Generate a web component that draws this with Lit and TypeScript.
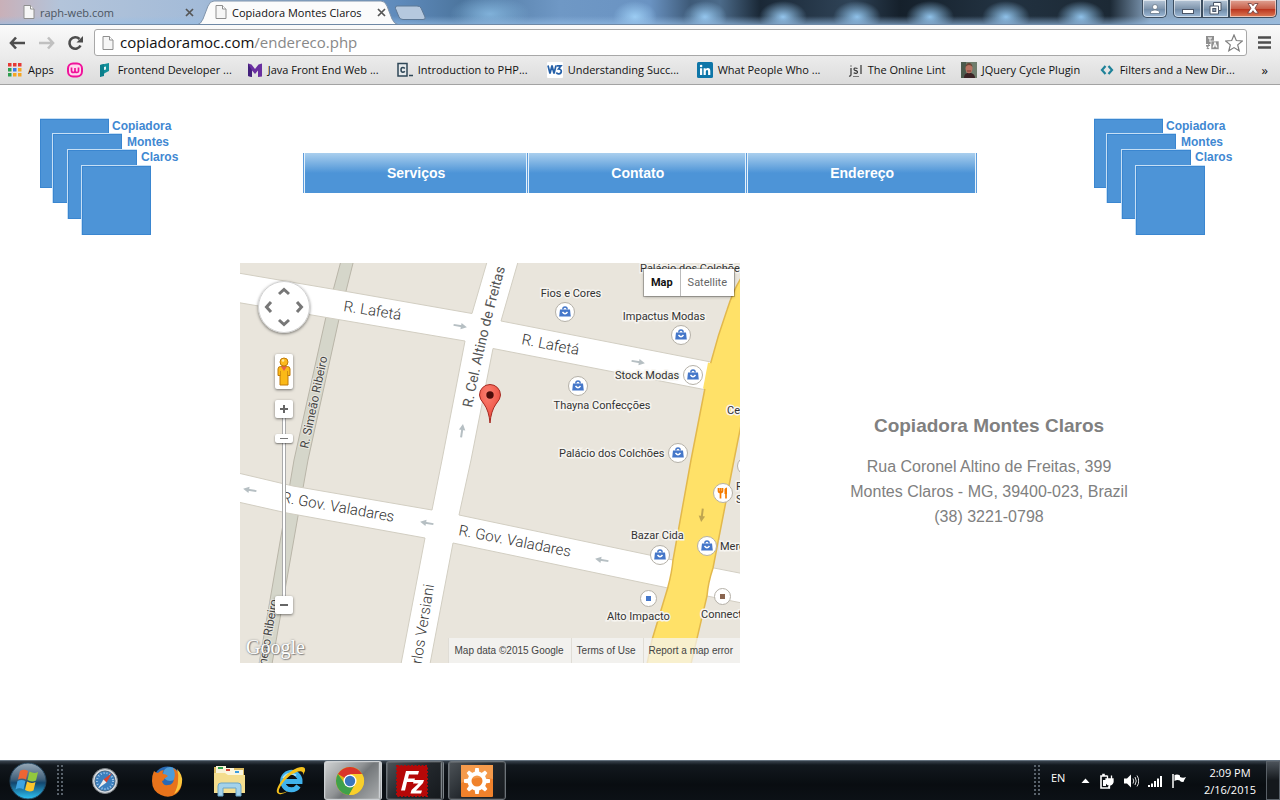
import { LitElement, html, svg, css } from "lit";
import { customElement } from "lit/decorators.js";

const pageIcon = html`<svg width="12" height="14" viewBox="0 0 12 14" aria-hidden="true">
  <path d="M1 .5h6.5L11 4v9.5H1z" fill="#f6f6f6" stroke="#8f8f8f" />
  <path d="M7.5.5V4H11" fill="#fff" stroke="#8f8f8f" />
</svg>`;

const reset = css`
  * { box-sizing: border-box; }
  button { font: inherit; color: inherit; background: none; border: 0; padding: 0; margin: 0; }
  a { color: inherit; text-decoration: none; }
  svg { display: block; flex: none; }
`;

interface Bookmark { label: string; size: string; icon: unknown; }

const bookmarks: Bookmark[] = [
  {
    label: "Frontend Developer ...", size: "long",
    icon: svg`<path d="M3 3l9-2v8l-4 2-5 4z" fill="#12909a"/><path d="M3 3l4-1v12l-4 1z" fill="#0c7f8c"/><path d="M7 5l2-.5v3L7 8z" fill="#e4f4f5"/>`,
  },
  {
    label: "Java Front End Web ...", size: "long",
    icon: svg`<path d="M1 1.500l3.500 1L8 7l3.500-4.500 3.500-1v13l-4 .5V8.500L8 12 5 8.500V15l-4-1z" fill="#6a2fa0"/><path d="M1 1.500L5 8.500V15l-4-1z" fill="#43207c"/>`,
  },
  {
    label: "Introduction to PHP...", size: "long",
    icon: svg`<rect x="1" y="1.500" width="9" height="12.500" fill="#e6eaec" stroke="#2f4757" stroke-width="1.500"/><path d="M7.800 6.500Q7 5.500 5.800 5.500 4 5.500 4 7.800 4 10.200 5.800 10.200 7 10.200 7.800 9.200" fill="none" stroke="#2f4757" stroke-width="1.500"/><path d="M12 13.500h4" stroke="#2f4757" stroke-width="1.500"/>`,
  },
  {
    label: "Understanding Succ...", size: "long",
    icon: svg`<rect width="16" height="16" rx="1" fill="#fff"/><path d="M1 3.500l2 8 2-8 2 8 2-8" fill="none" stroke="#2560a8" stroke-width="1.700"/><path d="M9.500 3.800h4.500L11.500 7q3 .2 2.800 2.600Q14 12 11.500 11.800q-1.500 0-2.200-1.300" fill="none" stroke="#2560a8" stroke-width="1.700"/>`,
  },
  {
    label: "What People Who ...", size: "long",
    icon: svg`<rect width="16" height="16" rx="1.500" fill="#0e76a8"/><path d="M3 6.300h2.200V13H3zM6.600 6.300h2.100v.9q.8-1.100 2.200-1.100 2.400 0 2.400 2.900v4h-2.200V9.400q0-1.400-1.100-1.400-1.200 0-1.200 1.500V13H6.600z" fill="#fff"/><circle cx="4.100" cy="4" r="1.300" fill="#fff"/>`,
  },
  {
    label: "The Online Lint", size: "short",
    icon: svg`<path d="M4 6v6.500q0 2-2 1.500M4 3.500v1M10.500 6.500Q7 5.200 7 7.200q0 1 1.800 1.400 2 .5 1.600 1.800-.8 1.600-3.700.5M14 3v9" fill="none" stroke="#333" stroke-width="1.200"/><path d="M6 14.500h6" stroke="#777"/>`,
  },
  {
    label: "JQuery Cycle Plugin", size: "medium",
    icon: svg`<rect width="16" height="16" fill="#6f7d6d"/><rect width="5" height="16" fill="#4c5b4d"/><path d="M3 16q0-4 3-5h4q4 1 4 5z" fill="#3a2325"/><ellipse cx="8" cy="6.500" rx="3.500" ry="4.800" fill="#b87362"/><path d="M4.500 5Q5 1 8 1t3.500 4Q10 3 8 3T4.500 5z" fill="#6b4636"/><path d="M6 9h4" stroke="#7e3d36"/>`,
  },
  {
    label: "Filters and a New Dir...", size: "long",
    icon: svg`<path d="M6.500 4L3 8l3.500 4M9.500 4L13 8l-3.500 4" fill="none" stroke="#1f8299" stroke-width="2.200"/>`,
  },
];

@customElement("browser-chrome")
class BrowserChrome extends LitElement {
  static styles = [reset, css`
    :host { display: block; font-family: "Open Sans", "Noto Sans", sans-serif; font-size: 11px; color: #111; }
    .titlebar {
      display: flex; height: 25px; padding-left: 5px; overflow: hidden;
      background:
        linear-gradient(to bottom, transparent 16px, rgba(150, 190, 230, .6) 24px),
        radial-gradient(ellipse 22px 16px at 635px 17px, #9ccdf4, transparent),
        radial-gradient(ellipse 22px 16px at 705px 17px, #94c6ee, transparent),
        radial-gradient(ellipse 24px 16px at 783px 17px, #94c6ee, transparent),
        radial-gradient(ellipse 24px 16px at 857px 17px, #8fc2ea, transparent),
        radial-gradient(ellipse 24px 16px at 930px 17px, #8fc2ea, transparent),
        radial-gradient(ellipse 24px 16px at 1006px 17px, #8fc2ea, transparent),
        radial-gradient(ellipse 24px 16px at 1081px 17px, #8fc2ea, transparent),
        radial-gradient(ellipse 40px 18px at 490px 14px, #80b1d9, transparent),
        linear-gradient(to right, #c9b0b8 0, #b3c4da 60px, #a3bbd8 200px, #5e8abb 400px, #4d769f 460px, #6f98c5 560px, #6a93c2 650px, #3e5a78 690px, #4c6b8a 720px, #1a2836 760px, #2f4357 850px, #15202b 900px, #223241 1000px, #1c2935 1110px, #87a3bf 1150px, #9db7d2 100%);
      border-bottom: 1px solid #6e88a5;
    }
    .tab { position: relative; display: flex; align-items: center; width: 203px; height: 25px; margin-right: -11px; padding: 0 14px 1px 18px; gap: 6px; color: #4b5561; }
    .tab.active { z-index: 1; color: #111; }
    .shape { position: absolute; inset: 0; z-index: -1; }
    .tab-name { flex: 1; display: flex; align-items: center; gap: 5px; text-align: left; white-space: nowrap; }
    .newtab { margin-top: 5px; margin-left: 5px; height: 16px; }
    .window { display: flex; margin-left: auto; align-items: flex-start; padding-right: 3px; }
    .winbtn { display: grid; place-items: center; height: 18px; width: 27px; border: 1px solid #3d4e60; border-top: 0; box-shadow: inset 0 0 0 1px rgba(255, 255, 255, .55); background: linear-gradient(#b6c6d7, #8096ae 50%, #6f89a5 51%, #9db9d6); }
    .user { width: 25px; margin-right: 6px; border-radius: 0 0 5px 5px; }
    .min { border-radius: 0 0 0 5px; width: 29px; }
    .close { width: 48px; border-radius: 0 0 5px 0; background: linear-gradient(#e0a394, #c8604a 50%, #b8301a 51%, #dd7a55); }
    .toolbar { display: flex; align-items: center; padding: 3px 9px 0; height: 32px; background: linear-gradient(#fafafa, #ebebeb); }
    .toolbar button { width: 17px; margin-right: 12px; }
    .toolbar .more { width: 13px; margin: 0 0 0 11px; }
    .omnibox { flex: 1; display: flex; align-items: center; height: 27px; padding: 0 3px 0 7px; gap: 6px; background: #fff; border: 1px solid #a8a8a8; border-radius: 3px; margin-left: -2px; }
    .address { position: relative; flex: 1; height: 25px; display: flex; }
    .url { flex: 1; border: 0; outline: 0; padding: 0; background: none; font: 15px/25px "Open Sans", "Noto Sans", sans-serif; color: transparent; min-width: 0; }
    .shown { position: absolute; inset: 0; font-size: 15px; line-height: 25px; color: #111; pointer-events: none; }
    .shown .path { color: #888; }
    .bookmarks { display: flex; align-items: center; height: 28px; padding: 0 12px 2px 8px; background: linear-gradient(#ebebeb, #dcdcdc); border-bottom: 1px solid #a3a3a3; white-space: nowrap; }
    .mark { display: flex; align-items: center; gap: 5px; margin-right: 14px; }
    .long { min-width: 136px; }
    .medium { min-width: 124px; }
    .short { min-width: 100px; }
    .apps { gap: 6px; margin-right: 13px; }
    .overflow { margin-left: auto; font-size: 13px; }
  `];

  tab(name: string, active: boolean) {
    return html`<div class="tab ${active ? "active" : ""}">
      <svg class="shape" width="203" height="25" viewBox="0 0 203 25" aria-hidden="true">
        <path d="M0 25Q4 24 6 19L11 6Q13 1 17 1H184Q188 1 190 6L195 19Q197 24 202 25Z" fill="${active ? "#fbfbfb" : "#c5d3e4"}" stroke="${active ? "#8094ab" : "#6d839d"}" />
      </svg>
      <button class="tab-name">${pageIcon}<span>${name}</span></button>
      <button aria-label="Close tab"><svg width="9" height="9" viewBox="0 0 9 9"><path d="M1 1l7 7M8 1L1 8" stroke="#555" stroke-width="1.700" /></svg></button>
    </div>`;
  }

  render() {
    return html`
      <div class="titlebar">
        ${this.tab("raph-web.com", false)}${this.tab("Copiadora Montes Claros", true)}
        <button class="newtab" aria-label="New tab">
          <svg width="33" height="16" viewBox="0 0 33 16"><path d="M3 1H23Q26 1 27 3L31 12Q32 14.500 29 14.500H9Q6 14.500 5 12L1.500 3.500Q1 1 3 1Z" fill="#b5c8de" stroke="#5d7896" /></svg>
        </button>
        <div class="window">
          <button class="winbtn user" aria-label="User"><svg width="10" height="10" viewBox="0 0 10 10"><circle cx="5" cy="3" r="2.500" fill="#fff" stroke="#4a5a6b" stroke-width=".6" /><path d="M.5 9.500V8Q1 6 5 6t4.500 2v1.500z" fill="#fff" stroke="#4a5a6b" stroke-width=".6" /></svg></button>
          <button class="winbtn min" aria-label="Minimize"><svg width="12" height="12" viewBox="0 0 12 12"><rect x=".5" y="6.500" width="11" height="4" fill="#fff" stroke="#4a5567" /></svg></button>
          <button class="winbtn" aria-label="Restore"><svg width="13" height="13" viewBox="0 0 13 13"><path d="M4.500.5h7.500v8H9.500v3.500H1V4h3.500z" fill="#fff" stroke="#4a5567" /><path d="M4.500 4h5v4.500" fill="none" stroke="#4a5567" /><rect x="3.800" y="6.500" width="3" height="3" fill="#8a9bb0" stroke="#4a5567" /></svg></button>
          <button class="winbtn close" aria-label="Close"><svg width="12" height="11" viewBox="0 0 12 11"><path d="M1 .5h3.300L6 2.800 7.700.5H11L8 5.200l3.300 5H7.800L6 7.700l-1.800 2.500H.7L4 5.200z" fill="#fff" stroke="#6b3a3a" stroke-width=".8" /></svg></button>
        </div>
      </div>
      <div class="toolbar">
        <button aria-label="Back"><svg width="17" height="14" viewBox="0 0 17 14"><path d="M7 1.500L2 7l5 5.500M2 7h14" fill="none" stroke="#4d4d4d" stroke-width="2.600" /></svg></button>
        <button aria-label="Forward"><svg width="17" height="14" viewBox="0 0 17 14"><path d="M10 1.500L15 7l-5 5.500M15 7H1" fill="none" stroke="#c0c0c0" stroke-width="2.600" /></svg></button>
        <button aria-label="Reload"><svg width="17" height="16" viewBox="0 0 17 16"><path d="M13.500 10.500A5.800 5.800 0 1 1 12.500 4" fill="none" stroke="#4d4d4d" stroke-width="2.600" /><path d="M16 1v6.500H9.500z" fill="#4d4d4d" /></svg></button>
        <div class="omnibox">
          ${pageIcon}
          <div class="address">
            <input class="url" aria-label="Address" value="copiadoramoc.com/endereco.php" />
            <div class="shown" aria-hidden="true">copiadoramoc.com<span class="path">/endereco.php</span></div>
          </div>
          <svg width="14" height="14" viewBox="0 0 14 14" aria-hidden="true"><rect x="1" width="8" height="8" fill="#8f8f8f" /><path d="M3 2h4M5 2v4" stroke="#fff" /><rect x="6" y="5" width="8" height="8.500" fill="#8f8f8f" stroke="#fff" stroke-width=".6" /><path d="M8 11.500l2-5 2 5M8.700 10h2.600" fill="none" stroke="#fff" stroke-width="1.100" /><path d="M1 9.500h4M2 13l2-5M4 13L1.500 10" stroke="#8f8f8f" stroke-width="1.100" /></svg>
          <svg width="18" height="18" viewBox="0 0 18 18" aria-hidden="true"><path d="M9 1l2.300 5.500 6 .5-4.600 3.900 1.500 5.900L9 13.600l-5.200 3.200 1.500-5.900L.7 7l6-.5z" fill="#fff" stroke="#7d7d7d" stroke-width="1.200" /></svg>
        </div>
        <button class="more" aria-label="Menu"><svg width="13" height="13" viewBox="0 0 13 13"><path d="M0 1.500h13M0 6.500h13M0 11.500h13" stroke="#4d4d4d" stroke-width="2.600" /></svg></button>
      </div>
      <div class="bookmarks">
        <a class="mark apps" href="#"><svg width="14" height="14" viewBox="0 0 14 14">${["#e53935", "#e53935", "#e53935", "#2e9e4f", "#3b78e7", "#f5a623", "#2e9e4f", "#f5a623", "#f5a623"].map((c, i) => svg`<rect x="${(i % 3) * 5}" y="${Math.floor(i / 3) * 5}" width="3.500" height="3.500" fill="${c}" />`)}</svg>Apps</a>
        <a class="mark" href="#" aria-label="Wamp"><svg width="16" height="16" viewBox="0 0 16 16"><rect x="1" y="1.500" width="14" height="13" rx="5" fill="#ffd9ee" stroke="#f0139b" stroke-width="2" /><path d="M4.500 5.500v3Q4.500 10.500 6.300 10.500 8 10.500 8 8.500V6 8.500Q8 10.500 9.800 10.500t1.700-2v-3" fill="none" stroke="#f0139b" stroke-width="1.700" /></svg></a>
        ${bookmarks.map((b) => html`<a class="mark ${b.size}" href="#"><svg width="16" height="16" viewBox="0 0 16 16">${b.icon}</svg>${b.label}</a>`)}
        <button class="overflow" aria-label="More bookmarks">»</button>
      </div>
    `;
  }
}

const poi = (x: number, y: number) => svg`<g transform="translate(${x} ${y})">
  <circle r="9.500" fill="#fff" stroke="#b5b1a8" />
  <path d="M-5-2.500h10L5.800 4.500H-5.800Z" fill="#4577c9" /><path d="M-2.200-2.500q0-2.500 2.200-2.500t2.200 2.500" fill="none" stroke="#4577c9" stroke-width="1.400" />
  <path d="M-2.500 0q2.500 3.500 5 0" fill="none" stroke="#fff" stroke-width="1.300" />
</g>`;
const arrow = (x: number, y: number, turn: number, tone = "#b6bfc3") => svg`<g transform="translate(${x} ${y}) rotate(${turn})">
  <path d="M-6.500 0H2" stroke="${tone}" stroke-width="2" /><path d="M1-3.200L7 0 1 3.200z" fill="${tone}" />
</g>`;

@customElement("street-map")
class StreetMap extends LitElement {
  static styles = [reset, css`
    :host { display: block; position: relative; width: 500px; height: 400px; overflow: hidden; background: #e9e5dc; font-family: Roboto, sans-serif; color: #444; }
    .road { fill: #fff; stroke: #d2cec2; }
    .street { font-size: 15px; font-weight: 300; fill: #333; }
    .avenue { font-size: 14px; font-weight: 400; fill: #555; }
    .minor { font-size: 12px; fill: #444; stroke: #e9e7e0; stroke-width: 2px; paint-order: stroke; }
    .place { font-size: 11px; fill: #333; stroke: #f6f4ef; stroke-width: 3px; paint-order: stroke; }
    .mid { text-anchor: middle; }
    .end { text-anchor: end; }
    .controls { position: absolute; left: 18px; top: 18px; display: flex; flex-direction: column; align-items: center; }
    .box { display: grid; place-items: center; width: 18px; height: 18px; background: #fff; border-radius: 2px; box-shadow: 0 1px 3px rgba(0, 0, 0, .5); z-index: 1; }
    .pan { border-radius: 50%; box-shadow: 0 1px 3px rgba(0, 0, 0, .5); margin-bottom: 21px; }
    .pegman { height: 35px; margin-bottom: 11px; }
    .zoom { appearance: none; writing-mode: vertical-lr; direction: rtl; width: 18px; height: 178px; margin: 0; background: linear-gradient(to right, transparent 7px, #aaa 7px, #aaa 8px, #fff 8px, #fff 10px, #aaa 10px, #aaa 11px, transparent 11px); }
    .zoom::-webkit-slider-thumb { appearance: none; width: 18px; height: 9px; border: 0; border-radius: 2px; background: linear-gradient(#777, #777) center / 8px 1px no-repeat, #fff; box-shadow: 0 1px 2px rgba(0, 0, 0, .5); }
    .types { position: absolute; right: 6px; top: 6px; display: flex; height: 27px; background: #fff; box-shadow: 0 0 0 1px rgba(0, 0, 0, .22), 0 1px 3px rgba(0, 0, 0, .3); font-size: 11px; }
    .types button { padding: 0 7px; color: #666; }
    .types .on { color: #111; font-weight: 700; border-right: 1px solid #bbb; }
    .legal { position: absolute; right: 0; bottom: 0; display: flex; height: 25px; align-items: center; font: 10px "Liberation Sans", Arial, sans-serif; }
    .legal > * { padding: 0 7px 0 5px; line-height: 25px; background: rgba(245, 245, 245, .72); border-left: 1px solid #e0ddd6; }
    .logo { position: absolute; left: 6px; bottom: 2px; font: 20px/27px "Liberation Serif", serif; color: #fff; text-shadow: 0 0 2px #777, 1px 1px 1px #888; }
  `];

  render() {
    return html`
      <svg width="500" height="400" viewBox="0 0 500 400" role="img" aria-label="Map of Rua Coronel Altino de Freitas">
        <defs>
          <path id="altino" d="M232 145Q247 67 269-8" />
          <radialGradient id="pin" cx=".4" cy=".25" r=".8"><stop offset="0" stop-color="#fb8071" /><stop offset="1" stop-color="#ea4335" /></radialGradient>
        </defs>
        <path d="M100.700-1L85.700 55 54 197 45 250 19 401H32L58 253 68 197 99 56 113.300-1Z" fill="#d5d6ca" stroke="#b9b5a8" />
        <path class="road" d="M-2 10L98 27 232 50.500 247-1H278L261 58 471 99 490 140 464 126.500 253 85.500 231 197 219 252 433 297 502 310.500V340L467 333 428 325 213 280 190 401H161L185 275 47 250-2 239V210L53 223 192 247 202 197 225 78-2 39.500Z" />
        <path d="M501 15Q493 28 487 47 478 72 471 99 468 108 466 120L451 197 433 297Q432 309 427.700 325L412 377 407 401H451L467 333Q468 320 473 305L494 197 501 162Z" fill="#ffe168" stroke="#e2b84c" stroke-width="1.500" />
        <path d="M470 100L465 126" stroke="#ffe168" stroke-width="4" />
        ${arrow(220, 63, 10)}${arrow(398, 99, 10)}${arrow(222, 168, -82)}${arrow(10, 227, 190)}${arrow(187, 260, 190)}${arrow(362, 297, 190)}${arrow(462, 252, 97, "#bfa550")}
        <text class="street" transform="translate(103 48) rotate(9)">R. Lafetá</text>
        <text class="street" transform="translate(281 81) rotate(11)">R. Lafetá</text>
        <text class="street avenue"><textPath href="#altino">R. Cel. Altino de Freitas</textPath></text>
        <text class="street" transform="translate(41 239) rotate(10)">R. Gov. Valadares</text>
        <text class="street" transform="translate(218 272) rotate(11)">R. Gov. Valadares</text>
        <text class="street end" transform="translate(194 322) rotate(-81)">R. Carlos Versiani</text>
        <text class="minor" transform="translate(68 186) rotate(-78)">R. Simeão Ribeiro</text>
        <text class="minor end" transform="translate(38 337) rotate(-80)">R. Simeão Ribeiro</text>
        <text class="place" x="400" y="9">Palácio dos Colchões</text>
        <text class="place mid" x="331" y="34">Fios e Cores</text>
        <text class="place mid" x="424" y="57">Impactus Modas</text>
        <text class="place" x="375" y="116">Stock Modas</text>
        <text class="place mid" x="362" y="146">Thayna Confecções</text>
        <text class="place" x="319" y="194">Palácio dos Colchões</text>
        <text class="place" x="391" y="276">Bazar Cida</text>
        <text class="place" x="367" y="357">Alto Impacto</text>
        <text class="place" x="461" y="355">Connect</text>
        <text class="place" x="480" y="287">Merc</text>
        <text class="place" x="487" y="151">Ce</text>
        <text class="place" x="496" y="227">R</text>
        <text class="place" x="496" y="240">S</text>
        ${poi(325, 49)}${poi(441, 72)}${poi(453, 112)}${poi(338, 123)}${poi(438, 190)}${poi(420, 292)}${poi(467, 283)}
        <circle cx="506" cy="203" r="8.500" fill="#fff" stroke="#b5b1a8" />
        <circle cx="483" cy="230" r="9.500" fill="#fff" stroke="#b5b1a8" />
        <path d="M478.500 225v3q0 1.500 2 1.500t2-1.500v-3M480.500 225v10.500M486 235.500V230" fill="none" stroke="#f57c00" stroke-width="1.700" /><path d="M484.500 231v-5q1-1.500 2.500-1.500v6.500z" fill="#f57c00" />
        <circle cx="408.500" cy="335.500" r="8" fill="#fff" stroke="#b5b1a8" /><rect x="406" y="333" width="5" height="5" fill="#4577c9" />
        <circle cx="482.500" cy="333.500" r="8" fill="#fff" stroke="#b5b1a8" /><rect x="480" y="331" width="5" height="5" fill="#8a6550" />
        <path d="M250 160Q249 148 244 141 239.500 136 239.500 132A10.500 10.500 0 0 1 260.500 132Q260.500 136 256 141 251 148 250 160Z" fill="url(#pin)" stroke="#a52a22" />
        <circle cx="250" cy="132" r="3.700" fill="#4c0d0a" />
      </svg>
      <div class="controls">
        <button class="pan" aria-label="Pan"><svg width="52" height="52" viewBox="0 0 52 52"><circle cx="26" cy="26" r="25.500" fill="#fff" stroke="#d0d0d0" /><path d="M21 13l5-4.500 5 4.500M21 39l5 4.500 5-4.500M13 21l-4.500 5 4.500 5M39 21l4.500 5-4.500 5" fill="none" stroke="#777" stroke-width="3" /></svg></button>
        <button class="box pegman" aria-label="Street View"><svg width="14" height="29" viewBox="0 0 14 29"><path d="M3.500 9.500h7q2.500 0 2.500 2.500v6.500h-2V28H3V18.500H1V12q0-2.500 2.500-2.500z" fill="#fbb917" stroke="#c07b0b" /><path d="M4 9.500h6L7 14z" fill="#e8604c" /><path d="M3.500 14v5M10.500 14v5" stroke="#c98410" stroke-width=".8" /><circle cx="7" cy="5" r="4" fill="#fcb91e" stroke="#c07b0b" /><circle cx="6" cy="3.500" r="1.300" fill="#ffe79a" /></svg></button>
        <button class="box" aria-label="Zoom in"><svg width="8" height="8" viewBox="0 0 8 8"><path d="M0 4h8M4 0v8" stroke="#666" stroke-width="2" /></svg></button>
        <input class="zoom" type="range" min="0" max="21" value="19" aria-label="Zoom level" />
        <button class="box" aria-label="Zoom out"><svg width="8" height="8" viewBox="0 0 8 8"><path d="M0 4h8" stroke="#666" stroke-width="2" /></svg></button>
      </div>
      <div class="types"><button class="on">Map</button><button>Satellite</button></div>
      <div class="logo">Google</div>
      <div class="legal"><span>Map data ©2015 Google</span><a href="#">Terms of Use</a><a href="#">Report a map error</a></div>
    `;
  }
}

@customElement("site-page")
class SitePage extends LitElement {
  static styles = [reset, css`
    :host { display: block; background: #fff; font-family: "Liberation Sans", Arial, sans-serif; overflow: hidden; }
    .header { display: grid; grid-template-columns: 1fr auto 1fr; align-items: start; padding: 33px 40px 0; }
    .header > :last-child { justify-self: end; }
    .brand { font-size: 12px; font-weight: 700; fill: #3f88d2; }
    .nav { display: flex; margin-top: 35px; border-left: 1px solid #5d9cdc; }
    .nav a { padding: 0 82px; font-size: 14px; font-weight: 700; line-height: 40px; color: #fff; background: linear-gradient(#aacfee, #4d94d7 50%); border-left: 1px solid #e4f1fb; border-right: 1px solid #5d9cdc; box-shadow: inset -1px 0 #e4f1fb; }
    .content { display: grid; grid-template-columns: auto 1fr; margin: 27px 42px 0 240px; }
    .contact { padding-top: 150px; text-align: center; color: #808080; }
    h1 { margin: 0 0 16px; font-size: 19px; line-height: 25px; }
    p { margin: 0; font-size: 16px; line-height: 25px; }
  `];

  logo() {
    return html`<svg width="146" height="118" viewBox="0 0 146 118" role="img" aria-label="Copiadora Montes Claros">
      ${[[0, 1], [13, 16], [28, 32], [42, 48]].map(([x, y]) => svg`<rect x="${x - 1}" y="${y - 1}" width="70" height="70" fill="#c6dff5" /><rect x="${x + 0.5}" y="${y + 0.5}" width="68" height="68" fill="#4d94d7" stroke="#3a86d0" />`)}
      <text class="brand" x="72" y="12">Copiadora</text><text class="brand" x="87" y="28">Montes</text><text class="brand" x="101" y="43">Claros</text>
    </svg>`;
  }

  render() {
    return html`
      <div class="header">
        <a href="#">${this.logo()}</a>
        <nav class="nav"><a href="#">Serviços</a><a href="#">Contato</a><a href="#">Endereço</a></nav>
        <a href="#">${this.logo()}</a>
      </div>
      <div class="content">
        <street-map></street-map>
        <div class="contact">
          <h1>Copiadora Montes Claros</h1>
          <p>Rua Coronel Altino de Freitas, 399</p>
          <p>Montes Claros - MG, 39400-023, Brazil</p>
          <p>(38) 3221-0798</p>
        </div>
      </div>
    `;
  }
}

const launchers = [
  {
    name: "Safari",
    art: svg`<circle cx="16" cy="16" r="12.500" fill="#d6dade" stroke="#7b8186" /><circle cx="16" cy="16" r="10" fill="#3b7fbf" stroke="#486b8a" /><circle cx="16" cy="16" r="8" fill="none" stroke="#a9cdee" stroke-dasharray="1 2" stroke-width="2" /><path d="M23 8l-5.500 9.500-3-3z" fill="#e0442d" /><path d="M9 23.500l5.500-9 3 3z" fill="#eee" />`,
  },
  {
    name: "Firefox",
    art: svg`<circle cx="16.500" cy="15.500" r="14" fill="#2a69b4" /><circle cx="19" cy="9" r="7" fill="#4d9cd8" /><path d="M3 6q2 2 4 2 3-3 6-3-2 2-1 4 3 0 5 2l-4 3q0 2-2 2 1 5 6 4 5 0 6-6 2-5-1-11 7 4 8.500 11Q32 24 25 29t-15 1Q1 26 1 16 1 10 3 6z" fill="#e8731b" /><path d="M26 4q6 6 5 13-1 8-8 12 4-7 4-13 1-6-1-12z" fill="#fbc63c" />`,
  },
  {
    name: "Windows Explorer",
    art: svg`<path d="M1 2h11l1 3h7v-2h11v24H1z" fill="#d9b961" /><rect x="3" y="1" width="10" height="7" fill="#f9f3d8" /><rect x="5" y="2" width="5" height="2" fill="#31a24c" /><rect x="12" y="3" width="9" height="7" fill="#fbf6de" /><rect x="13" y="4" width="4" height="2" fill="#d94a38" /><rect x="20" y="5" width="10" height="6" fill="#fbf6de" /><rect x="22" y="6" width="4" height="2" fill="#3e9ddd" /><path d="M1 8h11l3 2h17v18H1z" fill="#f4dd8e" /><path d="M5 31V21q0-3 3-3h17q3 0 3 3v10h-5v-8H10v8z" fill="#a4d2ea" stroke="#6aa5c8" />`,
  },
  {
    name: "Internet Explorer",
    art: svg`<path d="M23.500 21A8.700 8.700 0 1 1 25 16.500H9" fill="none" stroke="#3fb2ec" stroke-width="5" /><path d="M21 10.500A8.700 8.700 0 0 0 8 13" fill="none" stroke="#a5e1fb" stroke-width="1.700" /><path d="M4 29Q-1 28 5 18 12 7 22 3q9-3 8 3-1 2-2 4 1-5-5-3.500Q13 10 7 19 1 28 6 28q3 0 7-2-5 4-9 3z" fill="#f4c11c" />`,
  },
];
const running = [
  {
    name: "Google Chrome", state: "active stacked",
    art: svg`<circle cx="16" cy="16" r="14" fill="#dfb914" /><path d="M16 16L3.900 9A14 14 0 0 1 28.100 9z" fill="#d9352a" /><path d="M3.900 9A14 14 0 0 0 15 30l6-11H11z" fill="#3fa04a" /><path d="M28.100 9H16l5.500 10L15 30A14 14 0 0 0 28.100 9z" fill="#f8cf2c" /><circle cx="16" cy="16" r="6.500" fill="#fff" /><circle cx="16" cy="16" r="5.200" fill="#3a76bd" />`,
  },
  {
    name: "FileZilla", state: "stacked",
    art: svg`<rect x="1" y="1" width="30" height="30" fill="#b50808" stroke="#b50808" stroke-width="2" stroke-dasharray="2 1.500" /><path d="M10 6h13l-1 3.500H13l-1 4h7l-1 3.500h-7L9 25.500H5zM18 15h10l-1 3-7 7.500h6l-1 3H14.500l1-3.500 7-6.500h-5.500z" fill="#fff" />`,
  },
  {
    name: "Aptana Studio", state: "",
    art: svg`<rect width="32" height="32" rx="1" fill="#f0822c" /><path d="M0 0h32v14Q16 10 0 18z" fill="#f59a4b" />${[0, 45, 90, 135, 180, 225, 270, 315].map((a) => svg`<path d="M13.500 8l.8-5h3.400l.8 5z" fill="#fff" transform="rotate(${a} 16 16)" />`)}<circle cx="16" cy="16" r="7.500" fill="none" stroke="#fff" stroke-width="4" />`,
  },
];

@customElement("task-bar")
class TaskBar extends LitElement {
  static styles = [reset, css`
    :host { box-sizing: border-box; display: flex; align-items: stretch; height: 40px; border-top: 1px solid #63707d; background: linear-gradient(#39434d, #12181e 4px, #090d11 60%, #0c1116); color: #fff; font: 11px/17px "Open Sans", "Noto Sans", sans-serif; }
    button { display: grid; place-items: center; }
    .start { width: 55px; }
    .grip { width: 8px; margin: 4px 9px 3px 2px; background: radial-gradient(circle at 1px 1px, #59626b 1px, transparent 1px) 0 0 / 4px 4px; }
    .launch { width: 62px; }
    .app { width: 58px; margin-left: 2px; margin-right: 2px; border: 1px solid #6c7379; border-radius: 3px; background: linear-gradient(135deg, #4d5358, #23282d 50%, #15191d); box-shadow: inset 0 0 0 1px rgba(255, 255, 255, .12); }
    .stacked { padding-right: 4px; border-right: 3px double #7c8388; }
    .active { background: linear-gradient(135deg, #cfd1d2, #8f9294 45%, #73777a 55%, #a9acad); border-color: #cdd1d4; }
    .tray { display: flex; align-items: center; margin-left: auto; }
    .tray .grip { align-self: stretch; }
    .lang { width: 17px; margin: 0 13px 6px 0; }
    .icons { display: flex; align-items: center; gap: 9px; }
    .clock { width: 72px; margin-left: 7px; text-align: center; line-height: 17px; }
    .desktop { align-self: stretch; width: 14px; border: 1px solid #596067; background: linear-gradient(#4b5259, #14181c 50%); }
  `];

  render() {
    return html`
      <button class="start" aria-label="Start"><svg width="38" height="38" viewBox="0 0 38 38">
        <defs><linearGradient id="orb" x2="0" y2="1"><stop offset="0" stop-color="#97a9b8" /><stop offset=".45" stop-color="#42617b" /><stop offset=".55" stop-color="#12466e" /><stop offset="1" stop-color="#2ec4f5" /></linearGradient></defs>
        <circle cx="19" cy="19" r="18" fill="url(#orb)" stroke="#24465f" />
        <path d="M11 9q4-2.500 8 0l-2 8.500q-4-2.200-8 0z" fill="#ee6534" /><path d="M20.500 9.500q4.500 2.500 8.500.5l-2 8.500q-4.500 2-8.500-.5z" fill="#93c83e" /><path d="M8.500 19q4-2.200 8 0l-2 8.500q-4-2.500-8 0z" fill="#3ea4e2" /><path d="M18 19.500q4.500 2.500 8.500.5l-2 8.500q-4.500 2-8.500-.5z" fill="#fcc52c" />
      </svg></button>
      <div class="grip"></div>
      ${launchers.map((l) => html`<button class="launch" aria-label="${l.name}"><svg width="32" height="32" viewBox="0 0 32 32">${l.art}</svg></button>`)}
      ${running.map((l) => html`<button class="app ${l.state}" aria-label="${l.name}"><svg width="32" height="32" viewBox="0 0 32 32">${l.art}</svg></button>`)}
      <div class="tray">
        <div class="grip"></div>
        <span class="lang">EN</span>
        <div class="icons">
          <svg width="9" height="5" viewBox="0 0 9 5" aria-hidden="true"><path d="M.5 5h8L4.500.5z" fill="#fff" /></svg>
          <svg width="16" height="16" viewBox="0 0 16 16" aria-hidden="true"><path d="M8 3H5V1.500H4V3H2v12h8v-2" fill="none" stroke="#fff" stroke-width="1.600" /><path d="M4 7h3v6H4z" fill="#fff" /><path d="M7 6h7v3q-1 3-3.500 3T7 9zM8.500 2.500V6M12.500 2.500V6M10.500 12v3.500" fill="#fff" stroke="#fff" stroke-width="1.300" /></svg>
          <svg width="15" height="14" viewBox="0 0 15 14" aria-hidden="true"><path d="M0 4.500h3L7 .5v13L3 9.500H0z" fill="#fff" /><path d="M9 4.500q1.500 2.500 0 5M11 3q2.500 4 0 8M13 1.500q3.500 5.500 0 11" fill="none" stroke="#ddd" /></svg>
          <svg width="15" height="12" viewBox="0 0 15 12" aria-hidden="true"><path d="M1 12v-2M4 12V8.500M7 12V6M10 12V3.500M13 12V1" stroke="#fff" stroke-width="2" /></svg>
          <svg width="15" height="15" viewBox="0 0 15 15" aria-hidden="true"><path d="M1 1v14" stroke="#fff" stroke-width="1.500" /><path d="M2.500 2q3-1 5.500.5V4q3 1.500 6 0l-2 3.500v1q-2 1-4-.5V7.500q-3-1-5.500.5z" fill="#fff" /></svg>
        </div>
        <div class="clock">2:09 PM<br />2/16/2015</div>
        <button class="desktop" aria-label="Show desktop"></button>
      </div>
    `;
  }
}

@customElement("app-root")
class AppRoot extends LitElement {
  static styles = css`
    :host { display: flex; flex-direction: column; min-height: 100vh; }
    .page { flex: 1; }
  `;
  render() {
    return html`<browser-chrome></browser-chrome><site-page class="page"></site-page><task-bar></task-bar>`;
  }
}
